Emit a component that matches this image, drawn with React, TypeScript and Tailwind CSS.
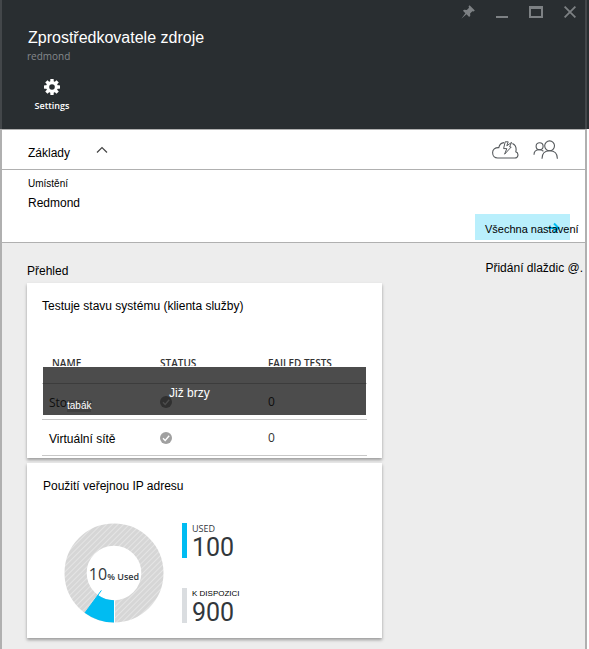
import React from "react";

const arial = "font-['Liberation_Sans',Arial,sans-serif]";

function PinIcon() {
  return (
    <svg className="h-[14px] w-[14px]" viewBox="0 0 16 16" fill="#7d8184" aria-hidden="true">
      <path d="M9.8 0.2 15.8 6.2 14.4 7.4 13 7 10.4 9.6 10.6 12.4 9.3 13.6 6.3 10.7 0.4 15.8 5 9.4 2.2 6.6 3.6 5.4 6.6 5.7 9.2 3.2 8.6 1.6Z" />
    </svg>
  );
}

function GearIcon() {
  return (
    <svg className="h-4 w-4" viewBox="-8 -8 16 16" aria-hidden="true">
      <g fill="#fff">
        {[0, 45, 90, 135].map((a) => (
          <rect key={a} x="-1.7" y="-8" width="3.4" height="16" rx="0.4" transform={`rotate(${a})`} />
        ))}
        <circle r="5.9" />
      </g>
      <circle r="2.8" fill="#292e31" />
    </svg>
  );
}

function CloudIcon() {
  return (
    <svg className="h-5 w-7" viewBox="0 0 28 20" fill="none" stroke="#55595c" strokeWidth="1.1" aria-hidden="true">
      <path d="M13 2.6C10 2.8 8.4 4.6 7.8 7.6 4 7.4 1.6 9.6 1.6 12.6 1.6 15.8 3.8 18 6.6 18H23.8C27.6 18 28 13 24.8 11.8 25.6 8.4 24.4 5 21.4 3.6" />
      <path d="M14.2 1.8H17.2L15.8 5.8 20.6 2.4 18.6 6.8 20.2 7 13.6 14.2 15.8 8.6H12.6Z" strokeWidth="1" />
    </svg>
  );
}

function UsersIcon() {
  return (
    <svg className="h-5 w-[26px]" viewBox="0 0 26 20" fill="none" stroke="#55595c" strokeWidth="1.1" aria-hidden="true">
      <circle cx="6.6" cy="6.2" r="3.5" />
      <path d="M1 14.8C1 11.6 3.2 9.8 6.3 9.8 8 9.8 9.4 10.4 10.4 11.2" />
      <circle cx="16.6" cy="5.8" r="4.9" />
      <path d="M9 18.8C9 13.6 12 10.8 16.6 10.8S24.4 13.6 24.4 18.8" />
    </svg>
  );
}

function CheckIcon() {
  return (
    <svg className="h-3 w-3" viewBox="0 0 12 12" role="img" aria-label="OK">
      <circle cx="6" cy="6" r="6" fill="#a0a0a0" />
      <path d="M3 6.2 5.2 8.4 9.2 3.8" fill="none" stroke="#fff" strokeWidth="1.4" />
    </svg>
  );
}

function Donut() {
  return (
    <svg className="h-[100px] w-[100px]" viewBox="-50 -50 100 100" aria-hidden="true">
      <defs>
        <pattern id="hatch" width="4" height="4" patternUnits="userSpaceOnUse" patternTransform="rotate(45)">
          <rect width="4" height="4" fill="#d6d6d6" />
          <rect width="1" height="4" fill="#e4e4e4" />
        </pattern>
      </defs>
      <circle r="38.4" fill="none" stroke="url(#hatch)" strokeWidth="22.2" />
      <path d="M0 27.3V49.5A49.5 49.5 0 0 1 -29.1 40L-16 22.1A27.3 27.3 0 0 0 0 27.3Z" fill="#00bcf2" />
      <path d="M-29.1 40-12.6 17.4" stroke="#00bcf2" strokeWidth="1" />
      <path d="M0.5 27.3V50" stroke="#fff" strokeWidth="1" />
    </svg>
  );
}

function Stat({ label, value, bar, labelClass }: { label: string; value: string; bar: string; labelClass: string }) {
  return (
    <div className="flex h-[35px]">
      <span className={`w-[5px] ${bar}`} />
      <div className="ml-[5px]">
        <div className={`leading-3 ${labelClass}`}>{label}</div>
        <div className="font-[Roboto,sans-serif] text-[25px] leading-[26px] text-[#32373c]">{value}</div>
      </div>
    </div>
  );
}

const rows = [
  { name: "Storage", failed: 0, nameClass: "text-xs" },
  { name: "Virtuální sítě", failed: 0, nameClass: "text-xs text-black font-['Liberation_Sans',Arial,sans-serif]" },
];

const card = "bg-white shadow-[0_2px_3px_rgba(0,0,0,0.35)]";

export default function App() {
  return (
    <div className="flex min-h-screen flex-col bg-white font-['Open_Sans','Noto_Sans',sans-serif] text-[#333]">
      <header className="bg-[#292e31] pr-[2px]">
        <div className="h-[129px] border-x-2 border-[#43474a]">
          <div className="flex h-6 items-center justify-end gap-[21px] pr-[9px]">
            <button aria-label="Pin"><PinIcon /></button>
            <button aria-label="Minimize" className="flex h-4 w-3 items-end pb-[2px]"><span className="h-[2px] w-3 bg-[#7d8184]" /></button>
            <button aria-label="Maximize" className="h-3 w-[14px] border-2 border-t-[3px] border-[#7d8184]" />
            <button aria-label="Close">
              <svg className="h-3 w-3" viewBox="0 0 12 12" stroke="#7d8184" strokeWidth="1.8" aria-hidden="true"><path d="M.6.6 11.4 11.4M11.4.6.6 11.4" /></svg>
            </button>
          </div>
          <h1 className={`mt-1 pl-[26px] text-base leading-5 text-white ${arial}`}>Zprostředkovatele zdroje</h1>
          <p className="pl-[25px] text-[10px] leading-4 text-[#85898c]">redmond</p>
          <button className="ml-[30px] mt-[15px] flex w-10 flex-col items-center text-[9px] leading-[14px] text-white">
            <GearIcon />
            <span className="mt-1 font-semibold">Settings</span>
          </button>
        </div>
      </header>

      <main className={`mr-[2px] flex grow flex-col border-x-2 border-[#b0b0b0] bg-[#ededed] text-xs text-black ${arial}`}>
        <section className="border-y border-[#b0b0b0] bg-white">
          <div className="flex h-10 items-center border-b border-[#b0b0b0] pl-[26px] pr-[26px]">
            <h2 className="mt-[6px]">Základy</h2>
            <button aria-label="Collapse" className="ml-[26px]">
              <svg className="h-2 w-3" viewBox="0 0 12 8" fill="none" stroke="#444" strokeWidth="1.2" aria-hidden="true"><path d="M1 6.5 6 1.5 11 6.5" /></svg>
            </button>
            <div className="ml-auto flex gap-[14px]">
              <CloudIcon />
              <UsersIcon />
            </div>
          </div>
          <dl className="px-[26px] pt-2">
            <dt className="text-[10px] leading-3">Umístění</dt>
            <dd className="mt-1 leading-[18px]">Redmond</dd>
          </dl>
          <div className="mt-[2px] flex justify-end pb-[2px] pr-[15px]">
            <button className="relative h-[26px] w-[95px] bg-[#b9effc] pl-[10px] pt-1 text-left text-[11px] whitespace-nowrap">
              <svg className="absolute right-[10px] top-2 h-3 w-3" viewBox="0 0 12 12" fill="none" stroke="#00bcf2" strokeWidth="2" aria-hidden="true"><path d="M0 6H10M6 1.5 10.5 6 6 10.5" /></svg>
              <span className="relative">Všechna nastavení</span>
            </button>
          </div>
        </section>

        <section className="pl-[25px]">
          <div className="flex h-10 justify-between pr-[2px]">
            <h2 className="mt-5">Přehled</h2>
            <button className="mb-auto mt-[17px]">Přidání dlaždic @.</button>
          </div>

          <article className={`h-[175px] w-[355px] px-[15px] pt-[15px] ${card}`}>
            <h3 className="leading-4">Testuje stavu systému (klienta služby)</h3>
            <div className="relative mt-10 font-['Open_Sans','Noto_Sans',sans-serif] text-[#333]">
              <table className="w-full table-fixed border-collapse text-left">
                <thead>
                  <tr className="h-[29px] border-b border-[#c8c8c8] align-top text-[10px] leading-4">
                    <th className="w-[118px] pl-[10px] pt-px font-semibold">NAME</th>
                    <th className="w-[108px] pt-px font-semibold">STATUS</th>
                    <th className="pt-px font-semibold">FAILED TESTS</th>
                  </tr>
                </thead>
                <tbody>
                  {rows.map((r) => (
                    <tr key={r.name} className="h-9 border-b border-[#c8c8c8]">
                      <td className={`pl-[7px] pt-[3px] ${r.nameClass}`}>{r.name}</td>
                      <td className="pt-[2px]"><CheckIcon /></td>
                      <td className="pt-[2px] text-xs">{r.failed}</td>
                    </tr>
                  ))}
                </tbody>
              </table>
              <div className="absolute left-px right-px top-3 border-t border-white">
                <div className={`relative h-12 bg-black/70 text-white ${arial}`}>
                  <span className="absolute left-[24px] top-[33px] bg-[#404040] text-[10px] leading-3">tabák</span>
                  <span className="absolute left-[126px] top-[18px] leading-4">Již brzy</span>
                </div>
              </div>
            </div>
          </article>

          <article className={`mt-[5px] h-[175px] w-[355px] pl-4 pt-[15px] ${card}`}>
            <h3 className="leading-4">Použití veřejnou IP adresu</h3>
            <div className="mt-[29px] flex pl-[21px] font-['Open_Sans','Noto_Sans',sans-serif]">
              <div className="relative">
                <Donut />
                <p className="absolute inset-0 flex items-baseline justify-center pt-[39px] text-[#32373c]">
                  <span className="text-base leading-6">10</span>
                  <span className="text-[9px] font-semibold">% Used</span>
                </p>
              </div>
              <div className="ml-[18px] flex flex-col gap-[30px]">
                <Stat label="USED" value="100" bar="bg-[#00bcf2]" labelClass="text-[9px] text-[#32373c]" />
                <Stat label="K DISPOZICI" value="900" bar="bg-[#dadde0]" labelClass="text-[8px] text-black font-['Liberation_Sans',Arial,sans-serif]" />
              </div>
            </div>
          </article>
        </section>
      </main>
    </div>
  );
}
